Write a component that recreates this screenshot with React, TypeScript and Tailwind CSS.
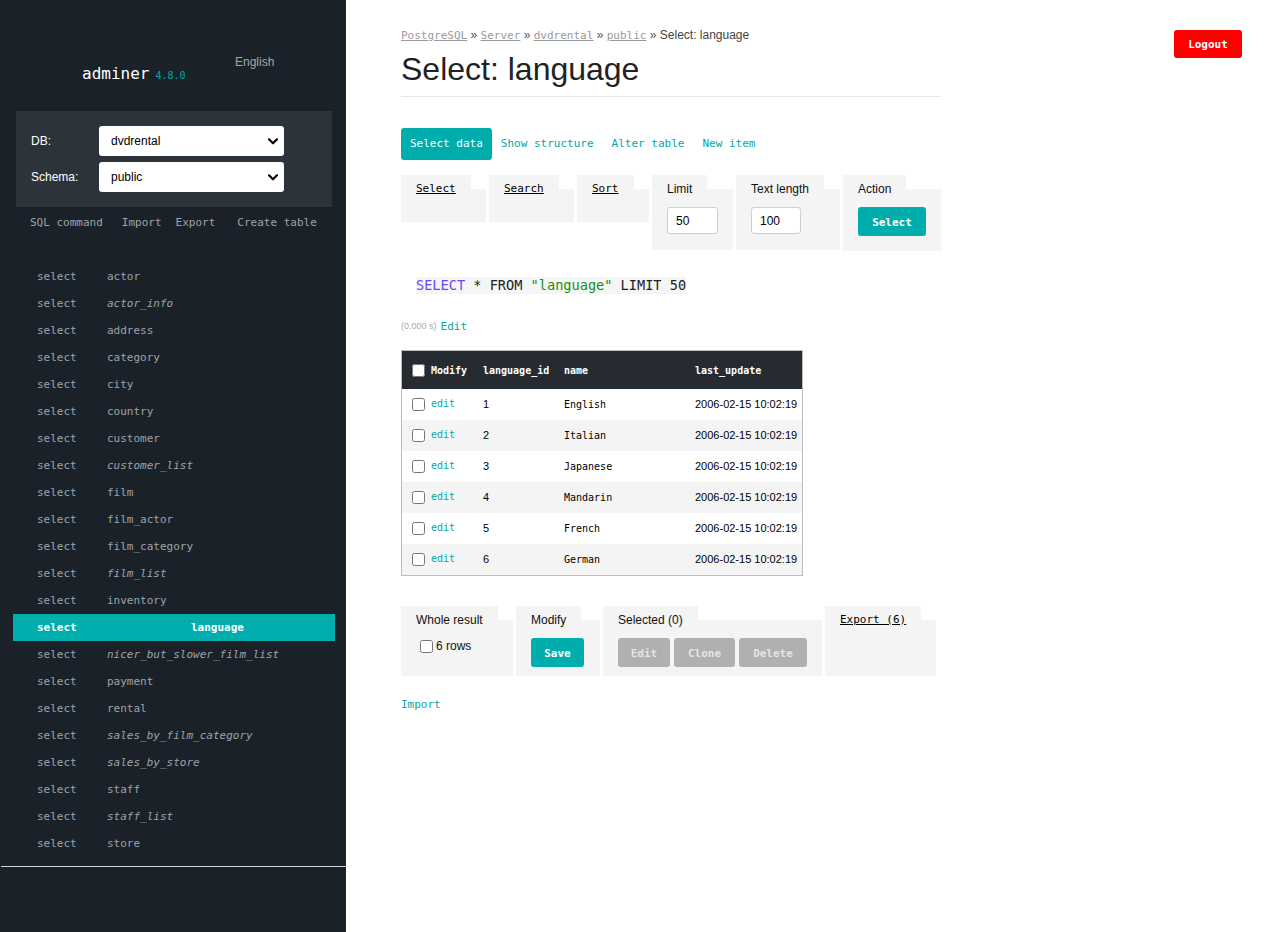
import React from "react";

const mono = "font-['DejaVu_Sans_Mono',monospace]";
const sans = "font-['Liberation_Sans',Arial,sans-serif]";

const tables: [string, boolean][] = [
  ["actor", false],
  ["actor_info", true],
  ["address", false],
  ["category", false],
  ["city", false],
  ["country", false],
  ["customer", false],
  ["customer_list", true],
  ["film", false],
  ["film_actor", false],
  ["film_category", false],
  ["film_list", true],
  ["inventory", false],
  ["language", false],
  ["nicer_but_slower_film_list", true],
  ["payment", false],
  ["rental", false],
  ["sales_by_film_category", true],
  ["sales_by_store", true],
  ["staff", false],
  ["staff_list", true],
  ["store", false],
];

const rows = [
  [1, "English"],
  [2, "Italian"],
  [3, "Japanese"],
  [4, "Mandarin"],
  [5, "French"],
  [6, "German"],
];

function Chevron() {
  return (
    <svg width="10" height="7" viewBox="0 0 10 7" className="shrink-0">
      <path d="M1 1.3 L5 5.3 L9 1.3" fill="none" stroke="#000" strokeWidth="2.2" strokeLinecap="round" strokeLinejoin="round" />
    </svg>
  );
}

function FakeSelect({ value }: { value: string }) {
  return (
    <div className={`w-[185px] h-[30px] bg-white rounded-[3px] flex items-center pl-[12px] pr-[6px] text-[12px] text-black ${sans}`}>
      <span className="flex-1">{value}</span>
      <Chevron />
    </div>
  );
}

function Fieldset({
  legend,
  width,
  bodyClass,
  children,
}: {
  legend: React.ReactNode;
  width: string;
  bodyClass: string;
  children?: React.ReactNode;
}) {
  return (
    <div className={`flex flex-col ${width}`}>
      <div className="relative z-10 self-start h-[28px] px-[15px] flex items-center bg-[#f4f4f4]">{legend}</div>
      <div className={`-mt-[14px] bg-[#f4f4f4] px-[15px] ${bodyClass}`}>{children}</div>
    </div>
  );
}

function Sidebar() {
  return (
    <aside className={`w-[346px] shrink-0 bg-[#1b2128] min-h-screen flex flex-col ${mono}`}>
      <div className="flex h-[111px]">
        <div className="w-[235px] pl-[82px] pt-[64px] flex items-baseline">
          <span className="text-[16px] leading-[20px] text-white">adminer</span>
          <span className="ml-[6px] text-[10px] text-[#00a9a9]">4.8.0</span>
        </div>
        <div className={`pt-[55px] text-[12px] leading-[14px] text-[#a3a8ad] ${sans}`}>English</div>
      </div>
      <div className="ml-[16px] w-[316px] h-[96px] bg-[#2d333a] px-[15px] pt-[15px]">
        <div className="flex items-center h-[30px]">
          <span className={`w-[68px] text-[12px] text-white ${sans}`}>DB:</span>
          <FakeSelect value="dvdrental" />
        </div>
        <div className="flex items-center h-[30px] mt-[6px]">
          <span className={`w-[68px] text-[12px] text-white ${sans}`}>Schema:</span>
          <FakeSelect value="public" />
        </div>
      </div>
      <div className="flex mt-[9px] h-[13px] items-center text-[11px] text-[#9da4aa] leading-[13px]">
        <span className="ml-[30px]">SQL command</span>
        <span className="ml-[19px]">Import</span>
        <span className="ml-[14px]">Export</span>
        <span className="ml-[22px]">Create table</span>
      </div>
      <div className="mt-[34px] flex flex-col text-[11px]">
        {tables.map(([name, italic]) => {
          const active = name === "language";
          return (
            <div
              key={name}
              className={`flex h-[27px] items-center ml-[13px] w-[322px] pt-[1px] ${active ? "bg-[#00aeae] text-white font-bold" : "text-[#9da4aa]"}`}
            >
              <span className="w-[87px] pl-[24px] shrink-0">select</span>
              <span className={`${active ? "flex-1 text-center" : "pl-[7px]"} ${italic ? "italic" : ""}`}>{name}</span>
            </div>
          );
        })}
      </div>
      <div className="mt-[9px] ml-[1px] border-t border-[#d2d2d2]" />
    </aside>
  );
}

function TealButton({ label, w, h = "h-[29px]" }: { label: string; w: string; h?: string }) {
  return (
    <div className={`${w} ${h} pt-[3px] rounded-[3px] bg-[#00adad] text-white font-bold text-[11px] flex items-center justify-center ${mono}`}>
      {label}
    </div>
  );
}

function GrayButton({ label, w }: { label: string; w: string }) {
  return (
    <div className={`${w} h-[29px] pt-[3px] rounded-[3px] bg-[#b0b0b0] text-[#e4e4e4] font-bold text-[11px] flex items-center justify-center ${mono}`}>
      {label}
    </div>
  );
}

function Main() {
  const linkLegend = (t: string) => <span className={`${mono} text-[11px] underline text-black`}>{t}</span>;
  const textLegend = (t: string) => <span className={`${sans} text-[12px] text-[#111]`}>{t}</span>;
  return (
    <main className="flex-1 flex">
      <div className={`ml-[55px] w-[540px] flex flex-col ${sans}`}>
        <div className="pt-[28px] text-[12px] leading-[14px] text-[#555]">
          <span className={`${mono} text-[11px] text-[#9a9a9a] underline`}>PostgreSQL</span> »{" "}
          <span className={`${mono} text-[11px] text-[#9a9a9a] underline`}>Server</span> »{" "}
          <span className={`${mono} text-[11px] text-[#9a9a9a] underline`}>dvdrental</span> »{" "}
          <span className={`${mono} text-[11px] text-[#9a9a9a] underline`}>public</span> »{" "}
          <span className="text-[#444]">Select: language</span>
        </div>
        <h2 className="mt-[8px] text-[32px] leading-[37px] pb-[8px] border-b border-[#e6e6e6] text-[#222] font-normal">
          Select: language
        </h2>
        <div className={`mt-[31px] flex items-center h-[32px] text-[11px] ${mono}`}>
          <div className="h-[32px] px-[9px] rounded-[3px] bg-[#00adad] text-white flex items-center">Select data</div>
          <span className="px-[9px] text-[#00a8a8]">Show structure</span>
          <span className="px-[9px] text-[#00a8a8]">Alter table</span>
          <span className="px-[9px] text-[#00a8a8]">New item</span>
        </div>
        <div className="mt-[15px] flex items-start gap-[3px]">
          <Fieldset legend={linkLegend("Select")} width="w-[85px]" bodyClass="h-[33px]" />
          <Fieldset legend={linkLegend("Search")} width="w-[85px]" bodyClass="h-[33px]" />
          <Fieldset legend={linkLegend("Sort")} width="w-[72px]" bodyClass="h-[33px]" />
          <Fieldset legend={textLegend("Limit")} width="w-[81px]" bodyClass="pt-[18px] pb-[16px]">
            <div className="w-[51px] h-[27px] bg-white border border-[#cfcfcf] rounded-[3px] flex items-center pl-[8px] text-[12px] text-black">50</div>
          </Fieldset>
          <Fieldset legend={textLegend("Text length")} width="w-[104px]" bodyClass="pt-[18px] pb-[16px]">
            <div className="w-[50px] h-[27px] bg-white border border-[#cfcfcf] rounded-[3px] flex items-center pl-[8px] text-[12px] text-black">100</div>
          </Fieldset>
          <Fieldset legend={textLegend("Action")} width="w-[98px]" bodyClass="pt-[18px] pb-[15px]">
            <TealButton label="Select" w="w-[68px]" />
          </Fieldset>
        </div>
        <div className="mt-[26px] pl-[15px] flex">
          <code className={`${mono} text-[13.6px] leading-[17px] h-[17px] bg-[#f5f5f5] text-[#222]`}>
            <span className="text-[#6a48f0]">SELECT</span> * FROM <span className="text-[#169116]">"language"</span> LIMIT 50
          </code>
        </div>
        <div className="mt-[25px] h-[16px] flex items-center">
          <span className="text-[9px] text-[#aaa]">(0.000 s)</span>
          <span className={`ml-[4px] text-[11px] text-[#00a8a8] ${mono}`}>Edit</span>
        </div>
        <div className="mt-[15px] w-[402px] border border-[#bcbcbc]">
          <div className={`grid grid-cols-[76px_81px_131px_112px] h-[38px] bg-[#262b31] text-white text-[10px] items-center ${mono}`}>
            <div className="pl-[10px] flex items-center">
              <input type="checkbox" className="w-[13px] h-[13px] m-0" readOnly />
              <span className="ml-[6px] font-bold">Modify</span>
            </div>
            <div className="pl-[5px] font-semibold">language_id</div>
            <div className="pl-[5px] font-semibold">name</div>
            <div className="pl-[5px] font-semibold">last_update</div>
          </div>
          {rows.map(([id, name], i) => (
            <div
              key={id}
              className={`grid grid-cols-[76px_81px_131px_112px] h-[31px] items-center ${i % 2 === 1 ? "bg-[#f4f4f4]" : "bg-white"}`}
            >
              <div className="pl-[10px] flex items-center">
                <input type="checkbox" className="w-[13px] h-[13px] m-0" readOnly />
                <span className={`ml-[6px] -mt-[2px] text-[10px] text-[#00a8a8] ${mono}`}>edit</span>
              </div>
              <div className="pl-[5px] text-[11px] text-black">{id}</div>
              <div className={`pl-[5px] text-[10px] text-black ${mono}`}>{name}</div>
              <div className="pl-[5px] text-[11px] text-black">2006-02-15 10:02:19</div>
            </div>
          ))}
        </div>
        <div className="mt-[30px] flex items-start gap-[3px]">
          <Fieldset legend={textLegend("Whole result")} width="w-[112px]" bodyClass="h-[56px] pt-[16px]">
            <label className="flex items-center h-[20px] text-[12px] text-[#111]">
              <input type="checkbox" className="w-[13px] h-[13px] ml-[4px] mr-[3px]" readOnly />
              6 rows
            </label>
          </Fieldset>
          <Fieldset legend={textLegend("Modify")} width="w-[84px]" bodyClass="h-[56px] pt-[18px]">
            <TealButton label="Save" w="w-[53px]" />
          </Fieldset>
          <Fieldset legend={textLegend("Selected (0)")} width="w-[219px]" bodyClass="h-[56px] pt-[18px]">
            <div className="flex gap-[4px]">
              <GrayButton label="Edit" w="w-[52px]" />
              <GrayButton label="Clone" w="w-[61px]" />
              <GrayButton label="Delete" w="w-[68px]" />
            </div>
          </Fieldset>
          <Fieldset legend={linkLegend("Export (6)")} width="w-[111px]" bodyClass="h-[56px]" />
        </div>
        <div className={`mt-[22px] h-[13px] leading-[13px] text-[11px] text-[#00a8a8] ${mono}`}>Import</div>
      </div>
      <div className="ml-auto mr-[38px] mt-[30px]">
        <div className={`w-[68px] h-[28px] pt-[3px] rounded-[3px] bg-[#ff0000] text-white font-bold text-[11px] flex items-center justify-center ${mono}`}>
          Logout
        </div>
      </div>
    </main>
  );
}

export default function App() {
  return (
    <div className="flex min-h-screen bg-white">
      <Sidebar />
      <Main />
    </div>
  );
}
